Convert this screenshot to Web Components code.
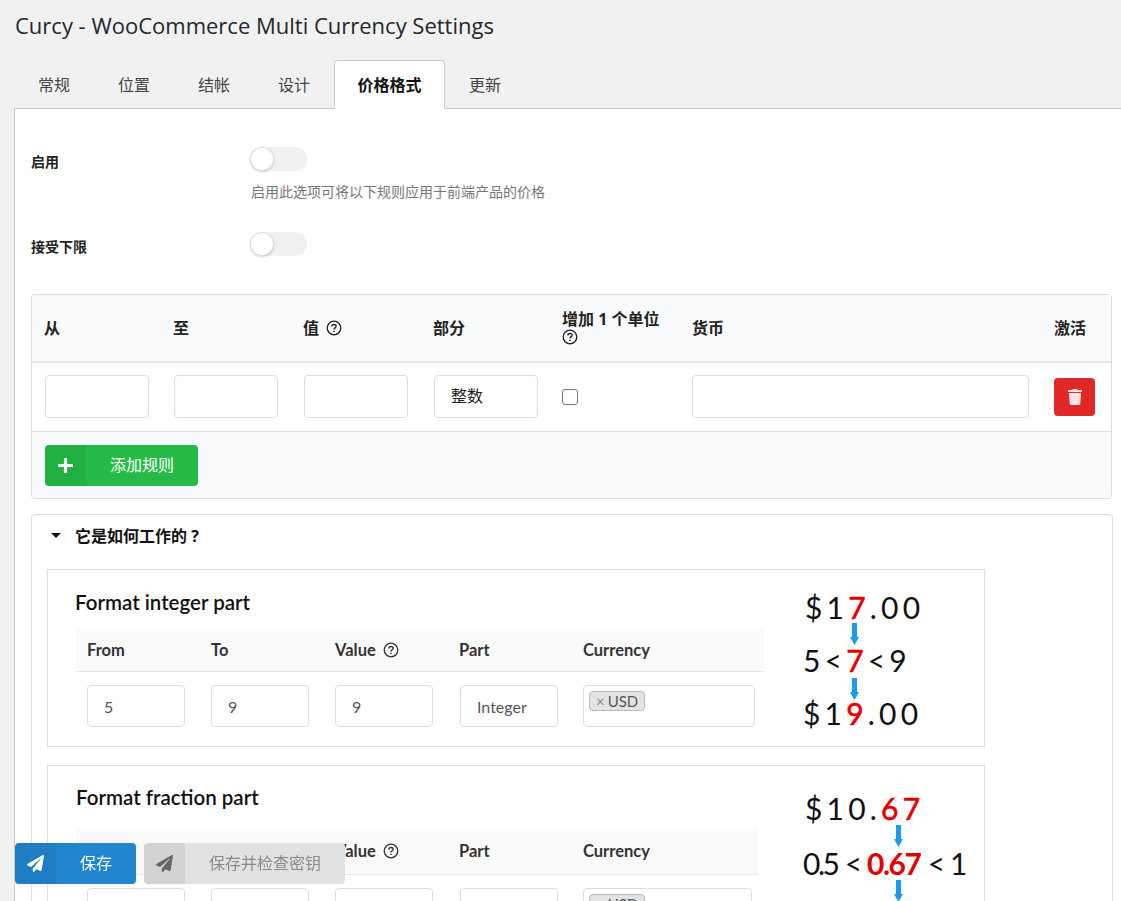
<!DOCTYPE html>
<html lang="zh">
<head>
<meta charset="utf-8">
<title>Curcy - WooCommerce Multi Currency Settings</title>
<style>
  html, body { margin: 0; height: 100%; overflow: hidden; }
  body {
    background: #f1f1f1;
    color: #222;
    font-family: "Open Sans", "Noto Sans CJK SC", sans-serif;
    font-size: 14px;
  }
</style>
</head>
<body>
<settings-page>
  <span slot="title">Curcy - WooCommerce Multi Currency Settings</span>
  <tab-bar slot="tabs">
    <tab-item>常规</tab-item>
    <tab-item>位置</tab-item>
    <tab-item>结帐</tab-item>
    <tab-item>设计</tab-item>
    <tab-item active>价格格式</tab-item>
    <tab-item>更新</tab-item>
  </tab-bar>

  <toggle-row style="height:60px">
    <span slot="label">启用</span>
    启用此选项可将以下规则应用于前端产品的价格
  </toggle-row>
  <toggle-row style="margin-top:25px;height:62px">
    <span slot="label">接受下限</span>
  </toggle-row>

  <rule-table></rule-table>

  <how-it-works>
    <span slot="title">它是如何工作的 ?</span>
    <example-card heading="Format integer part" part="Integer" heading-left="27" heading-top="20" head-gap="14" head-height="44" table-end="688" currency-width="172" diagram-left="39" diagram-top="22" from="5" to="9" value="9">
      <price-line style="margin-left:2px">$1<em>7</em>.00</price-line>
      <down-arrow style="margin:1px 0 0 47px"></down-arrow>
      <price-line style="letter-spacing:0;word-spacing:-3.5px">5 &lt; <em>7</em> &lt; 9</price-line>
      <down-arrow style="margin:3px 0 -2px 47px"></down-arrow>
      <price-line>$1<em>9</em>.00</price-line>
    </example-card>
    <example-card heading="Format fraction part" part="Integer" heading-left="28" heading-top="19" head-gap="19" head-height="47" table-end="682" currency-width="169" diagram-left="45" diagram-top="27" from="" to="" value="">
      <price-line style="margin-left:2px">$10.<em>67</em></price-line>
      <down-arrow style="margin:2px 0 1px 91px"></down-arrow>
      <price-line style="letter-spacing:-2.5px;word-spacing:2.2px">0.5 &lt; <strong>0.67</strong> &lt; 1</price-line>
      <down-arrow style="margin:2px 0 0 91px"></down-arrow>
    </example-card>
  </how-it-works>
</settings-page>

<action-bar>
  <action-button color="blue">保存</action-button>
  <action-button color="grey">保存并检查密钥</action-button>
</action-bar>

<script>
const PLANE = "M476 3.2L12.5 270.6c-18.1 10.4-15.8 35.6 2.2 43.2L121 358.4l287.3-253.2c5.5-4.9 13.3 2.6 8.6 8.3L176 407v80.5c0 23.6 28.5 32.9 42.5 15.8L282 426l124.6 52.2c14.2 6 30.4-2.9 33-18.2l72-432C515 7.8 493.3-6.8 476 3.2z";
const TRASH = "M432 32H312l-9.4-18.7A24 24 0 0 0 281.1 0H166.8a23.72 23.72 0 0 0-21.4 13.3L136 32H16A16 16 0 0 0 0 48v32a16 16 0 0 0 16 16h416a16 16 0 0 0 16-16V48a16 16 0 0 0-16-16zM53.2 467a48 48 0 0 0 47.9 45h245.8a48 48 0 0 0 47.9-45L416 128H32z";
const PLUS = "M416 208H272V64c0-17.67-14.33-32-32-32h-32c-17.67 0-32 14.33-32 32v144H32c-17.67 0-32 14.33-32 32v32c0 17.67 14.33 32 32 32h144v144c0 17.67 14.33 32 32 32h32c17.67 0 32-14.33 32-32V304h144c17.67 0 32-14.33 32-32v-32c0-17.67-14.33-32-32-32z";

// small helper, most elements here are just a style + slots
function simple(name, html) {
  customElements.define(name, class extends HTMLElement {
    constructor() {
      super();
      this.attachShadow({mode: "open"}).innerHTML = html;
    }
  });
}

simple("settings-page", `
<style>
  :host { display: block; }
  h1 { margin: 0; padding: 11px 15px 0; height: 60px; box-sizing: border-box; font-size: 22px; line-height: 29px; font-weight: 400; color: #23282d; }
  .panel { margin-left: 14px; background: #fff; border-left: 1px solid #ccc; border-top: 1px solid #ccc; padding: 38px 9px 0 16px; }
</style>
<h1><slot name="title"></slot></h1>
<slot name="tabs"></slot>
<div class="panel"><slot></slot></div>`);

simple("tab-bar", `
<style>
  :host { display: flex; height: 49px; padding-left: 14px; box-sizing: border-box; margin-bottom: -1px; position: relative; z-index: 1; }
</style>
<slot></slot>`);

simple("tab-item", `
<style>
  :host { display: block; padding: 0 23px; height: 49px; line-height: 49px; font-size: 16px; color: #444; box-sizing: border-box; border: 1px solid transparent; border-bottom: 0; }
  :host([active]) { background: #fff; border-color: #ccc; border-radius: 4px 4px 0 0; font-weight: 700; color: #111; padding: 0 22.5px; }
</style>
<slot></slot>`);

simple("toggle-switch", `
<style>
  :host { display: block; width: 57px; height: 24px; border-radius: 12px; background: #f0f0f0; position: relative; }
  i { position: absolute; left: 0; top: 0; width: 24px; height: 24px; border-radius: 50%; background: #fff; box-shadow: 0 1px 2px rgba(34,36,38,.2), 0 0 0 1px rgba(34,36,38,.15) inset; }
</style>
<i></i>`);

simple("toggle-row", `
<style>
  :host { display: grid; grid-template-columns: 219px 1fr; }
  .label { font-weight: 700; font-size: 14px; line-height: 30px; color: #222; }
  .desc { margin: 11px 0 0 1px; font-size: 14px; line-height: 20px; color: #777; }
</style>
<div class="label"><slot name="label"></slot></div>
<div><toggle-switch></toggle-switch><div class="desc"><slot></slot></div></div>`);

simple("help-icon", `
<style>
  :host { display: inline-block; vertical-align: -2px; line-height: 0; margin-left: 3px; }
  svg { width: 16px; height: 16px; fill: none; stroke: currentColor; }
</style>
<svg viewBox="0 0 16 16"><circle cx="8" cy="8" r="6.8" stroke-width="1.3"/><path d="M5.9 6.4c0-1.2 1-1.9 2.1-1.9s2.1.7 2.1 1.8c0 1.5-2.1 1.6-2.1 3.1" stroke-width="1.4"/><path d="M8 10.7v1.4" stroke-width="1.5"/></svg>`);

simple("icon-button", `
<style>
  :host { display: inline-flex; height: 41px; border-radius: 4px; overflow: hidden; background: var(--bg); color: var(--fg, #fff); font-size: 16px; }
  .ic { width: 41px; flex: none; display: flex; align-items: center; justify-content: center; background: rgba(0,0,0,.06); }
  .tx { flex: 1; display: flex; align-items: center; justify-content: center; padding: 0 24px 4px; white-space: nowrap; }
  ::slotted(svg) { width: 17px; height: 17px; fill: var(--ic, #fff); }
</style>
<div class="ic"><slot name="icon"></slot></div>
<div class="tx"><slot></slot></div>`);

customElements.define("rule-table", class extends HTMLElement {
  constructor() {
    super();
    const cols = ["从", "至", "值 <help-icon></help-icon>", "部分", "增加 1 个单位<br><help-icon style='margin-left:0'></help-icon>", "货币", "激活"];
    this.attachShadow({mode: "open"}).innerHTML = `
<style>
  :host { display: block; border: 1px solid #ddd; border-radius: 4px; overflow: hidden; font-size: 16px; }
  .row { display: grid; grid-template-columns: 129px 130px 130px 129px 130px 362px 1fr; padding: 0 0 0 12px; align-items: center; }
  .head { height: 66px; background: #f9fafb; border-bottom: 2px solid #e7e8ea; font-weight: 700; color: #222; line-height: 18px; }
  .body { border-bottom: 1px solid #ddd; padding-bottom: 1px; height: 67px; }
  .field { box-sizing: border-box; width: 104px; height: 43px; margin-left: 1px; border: 1px solid #ddd; border-radius: 4px; background: #fff; padding: 0 16px; line-height: 41px; color: #222; }
  .wide { width: 337px; margin-left: 0; }
  .check { width: 16px; height: 16px; box-sizing: border-box; border: 1px solid #767676; border-radius: 3px; background: #fff; }
  .del { width: 41px; height: 38px; border-radius: 4px; background: #e02828; display: flex; align-items: center; justify-content: center; }
  .del svg { width: 14px; height: 16px; fill: #ffe3e3; }
  .foot { background: #f9fafb; padding: 13px; height: 66px; box-sizing: border-box; }
  icon-button { --bg: #26bb47; width: 153px; }
</style>
<div class="row head">${cols.map(c => `<div>${c}</div>`).join("")}</div>
<div class="row body">
  <div class="field"></div><div class="field"></div><div class="field"></div>
  <div class="field">整数</div>
  <div class="check"></div>
  <div class="field wide"></div>
  <div class="del"><svg viewBox="0 0 448 512"><path d="${TRASH}"/></svg></div>
</div>
<div class="foot"><icon-button><svg slot="icon" viewBox="0 32 448 448" style="width:15px;height:15px"><path d="${PLUS}"/></svg>添加规则</icon-button></div>`;
  }
});

simple("how-it-works", `
<style>
  :host { display: block; margin-top: 15px; border: 1px solid #ddd; border-radius: 4px 4px 0 0; width: 1082px; padding: 0 15px 20px; box-sizing: border-box; }
  .title { display: flex; align-items: center; height: 40px; margin: 0 0 14px; font-size: 16px; font-weight: 700; color: #111; }
  .caret { width: 0; height: 0; border: 5px solid transparent; border-top: 5px solid #111; border-bottom: 0; margin: 0 14px 0 4px; }
</style>
<div class="title"><i class="caret"></i><slot name="title"></slot></div>
<slot></slot>`);

customElements.define("example-card", class extends HTMLElement {
  constructor() {
    super();
    const a = n => this.getAttribute(n);
    const heads = ["From", "To", "Value <help-icon></help-icon>", "Part", "Currency"];
    const vals = [a("from"), a("to"), a("value")];
    this.attachShadow({mode: "open"}).innerHTML = `
<style>
  :host { display: block; width: 938px; box-sizing: border-box; border: 1px solid #ddd; background: #fff; margin-bottom: 18px; font-family: Lato, "Noto Sans CJK SC", sans-serif; }
  .wrap { display: flex; }
  .left { width: ${+a("table-end") + 28}px; padding-left: 28px; box-sizing: border-box; flex: none; }
  h3 { margin: 0 0 0 ${a("heading-left") - 28}px; padding-top: ${a("heading-top")}px; font-size: 20.5px; line-height: 24px; font-weight: 600; color: #111; }
  .grid { display: grid; grid-template-columns: repeat(4, 124px) 1fr; }
  .hd { box-sizing: border-box; height: ${a("head-height")}px; margin-top: ${a("head-gap")}px; background: #fafafa; border-bottom: 1px solid #e4e4e4; font-weight: 700; font-size: 16.5px; color: #333; align-items: center; }
  .hd div { padding-left: 11px; }
  .bd { padding: 13px 0 19px; }
  .bd div { margin-left: 11px; box-sizing: border-box; width: 98px; height: 42px; border: 1px solid #ddd; border-radius: 4px; padding-left: 16px; font-size: 16px; line-height: 42px; color: #555; }
  .bd .part { margin-left: 12px; }
  .bd .cur { width: ${a("currency-width")}px; padding: 5px; line-height: 1; }
  .chip { display: inline-block; border: 1px solid #bbb; border-radius: 4px; background: #e4e4e4; font-size: 15px; line-height: 18px; padding: 0 6px; color: #555; }
  .chip b { font-weight: 400; color: #888; margin-right: 3px; }
  .right { padding-left: ${a("diagram-left")}px; padding-top: ${a("diagram-top")}px; }
</style>
<div class="wrap">
  <div class="left">
    <h3>${a("heading")}</h3>
    <div class="grid hd">${heads.map(h => `<div>${h}</div>`).join("")}</div>
    <div class="grid bd">
      ${vals.map(v => `<div>${v}</div>`).join("")}
      <div class="part">${a("part")}</div>
      <div class="cur"><span class="chip"><b>×</b>USD</span></div>
    </div>
  </div>
  <div class="right"><slot></slot></div>
</div>`;
  }
});

simple("price-line", `
<style>
  :host { display: block; font-size: 30px; line-height: 30px; color: #111; letter-spacing: 4.2px; white-space: nowrap; }
  ::slotted(em) { font-style: normal; color: #e40000; -webkit-text-stroke: .6px #e40000; }
  ::slotted(strong) { font-weight: 700; color: #e40000; letter-spacing: -1.5px; }
</style>
<slot></slot>`);

simple("down-arrow", `
<style>
  :host { display: block; width: 9px; height: 22px; line-height: 0; }
  svg { width: 9px; height: 22px; fill: #1a9bef; }
</style>
<svg viewBox="0 0 9 22"><path d="M2 0h5v14h2l-4.5 8L0 14h2z"/></svg>`);

simple("action-bar", `
<style>
  :host { position: fixed; left: 15px; bottom: 17px; display: flex; gap: 8px; }
</style>
<slot></slot>`);

customElements.define("action-button", class extends HTMLElement {
  constructor() {
    super();
    this.attachShadow({mode: "open"}).innerHTML = `
<style>
  :host { display: block; }
  :host([color=blue]) icon-button { --bg: #2185d0; width: 121px; }
  :host([color=grey]) icon-button { --bg: #e0e1e2; --fg: #8a8a8a; --ic: #666; width: 201px; }
</style>
<icon-button><svg slot="icon" viewBox="0 0 512 512"><path d="${PLANE}"/></svg><slot></slot></icon-button>`;
  }
});
</script>
</body>
</html>
